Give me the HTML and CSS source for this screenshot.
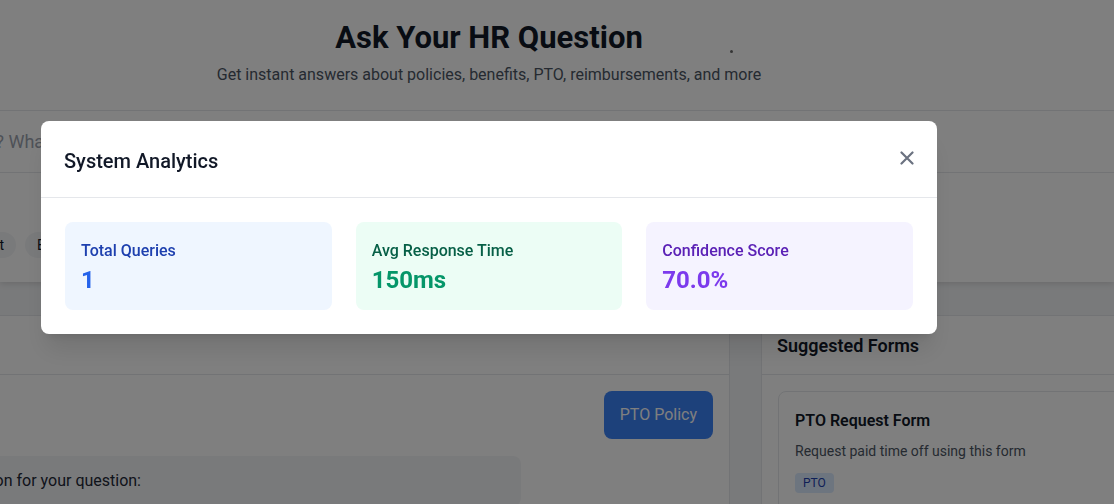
FILE: index.html
```html
<!DOCTYPE html>
<html lang="en">
<head>
<meta charset="utf-8">
<title>Ask Your HR Question</title>
<link rel="stylesheet" href="styles.css">
</head>
<body>
<div class="page">
  <header class="hero">
    <div class="hero-inner">
      <h1 class="hero-title">Ask Your HR Question</h1>
      <p class="hero-sub">Get instant answers about policies, benefits, PTO, reimbursements, and more</p>
    </div>
    <span class="dot"></span>
  </header>

  <section class="search-card">
    <div class="search-row">
      <div class="lead lead-search"><span class="search-text">e.g., How many vacation days do I have?</span></div>
      <span class="search-text">&nbsp;What is the parental leave policy?</span>
    </div>
    <div class="quick">
      <div class="quick-label">Popular questions</div>
      <div class="chips">
        <div class="lead lead-chips"><span class="chip">Request equipment</span></div>
        <span class="chip">Benefits enrollment</span>
        <span class="chip">Remote work policy</span>
      </div>
    </div>
  </section>

  <main class="grid">
    <section class="panel chat">
      <div class="panel-head"></div>
      <div class="messages">
        <div class="msg-row user"><div class="bubble user-bubble">PTO Policy</div></div>
        <div class="msg-row bot">
          <div class="bubble bot-bubble">
            <div class="lead lead-bot"><span class="bot-text">Here is the relevant information for your question:</span></div>
          </div>
        </div>
      </div>
    </section>
    <aside class="panel forms">
      <div class="panel-head"><h2 class="panel-title">Suggested Forms</h2></div>
      <div class="forms-body">
        <div class="form-card">
          <h3 class="form-title">PTO Request Form</h3>
          <p class="form-desc">Request paid time off using this form</p>
          <span class="tag">PTO</span>
        </div>
      </div>
    </aside>
  </main>
</div>

<div class="overlay">
  <div class="modal">
    <div class="modal-head">
      <h2 class="modal-title">System Analytics</h2>
      <button class="close" aria-label="Close">
        <svg width="14" height="14" viewBox="0 0 14 14"><path d="M1.5 1.5L12.5 12.5M12.5 1.5L1.5 12.5" stroke="#6b7280" stroke-width="2.2" stroke-linecap="round"/></svg>
      </button>
    </div>
    <div class="modal-body">
      <div class="stat stat-blue">
        <div class="stat-label">Total Queries</div>
        <div class="stat-value">1</div>
      </div>
      <div class="stat stat-green">
        <div class="stat-label">Avg Response Time</div>
        <div class="stat-value">150ms</div>
      </div>
      <div class="stat stat-purple">
        <div class="stat-label">Confidence Score</div>
        <div class="stat-value">70.0%</div>
      </div>
    </div>
  </div>
</div>
</body>
</html>
```

FILE: styles.css
```css
* { box-sizing: border-box; }
html, body { margin: 0; padding: 0; }
body {
  width: 1114px;
  height: 504px;
  overflow: hidden;
  background: #f3f4f6;
  font-family: Roboto, "Noto Sans", "Liberation Sans", sans-serif;
  color: #111827;
}
.page { width: 1114px; background: #f3f4f6; }

/* right-aligned box whose text overflows off the left edge */
.lead {
  display: flex;
  justify-content: flex-end;
  flex: none;
  white-space: nowrap;
}

.hero {
  position: relative;
  background: #ffffff;
  border-bottom: 1px solid #e5e7eb;
  height: 111px;
}
.hero-inner {
  width: 896px;
  margin-left: 41px;
  padding-top: 19px;
  text-align: center;
}
.hero-title {
  margin: 0;
  font-size: 31px;
  line-height: 37px;
  font-weight: 700;
  color: #111827;
}
.hero-sub {
  margin: 7px 0 0;
  font-size: 16px;
  line-height: 24px;
  color: #4b5563;
}
.dot {
  position: absolute;
  left: 730px;
  top: 50px;
  width: 3px;
  height: 3px;
  border-radius: 50%;
  background: #6b6b6b;
}

.search-card {
  background: #ffffff;
  box-shadow: 0 2px 6px rgba(0,0,0,0.12);
  margin-bottom: 33px;
}
.search-row {
  height: 62px;
  border-bottom: 1px solid #e5e7eb;
  display: flex;
  align-items: center;
  overflow: hidden;
  white-space: nowrap;
}
.lead-search {
  width: 400px;
  margin-left: -396px;
}
.search-text {
  font-size: 18px;
  color: #9ca3af;
}
.quick {
  height: 109px;
  padding-top: 20px;
}
.quick-label {
  font-size: 14px;
  line-height: 20px;
  color: #4b5563;
  margin-left: 60px;
}
.chips {
  display: flex;
  gap: 9px;
  margin-top: 19px;
}
.lead-chips {
  width: 300px;
  margin-left: -284px;
}
.chip {
  background: #f3f4f6;
  border-radius: 9999px;
  padding: 3px 12px;
  font-size: 14px;
  line-height: 20px;
  color: #111827;
  white-space: nowrap;
}

.grid {
  display: flex;
  gap: 31px;
  margin-left: -92px;
}
.panel {
  flex: none;
  background: #ffffff;
  border: 1px solid #e5e7eb;
}
.chat { width: 822px; height: 220px; }
.forms { width: 400px; height: 220px; }
.panel-head {
  height: 59px;
  padding: 16px 16px 12px 15px;
  border-bottom: 1px solid #e5e7eb;
}
.panel-title {
  margin: 0;
  font-size: 18px;
  line-height: 28px;
  font-weight: 600;
  color: #111827;
}
.messages {
  padding: 16px 16px;
  display: flex;
  flex-direction: column;
  gap: 17px;
}
.msg-row { display: flex; }
.msg-row.user { justify-content: flex-end; }
.bubble {
  border-radius: 8px;
  font-size: 16px;
  line-height: 24px;
}
.user-bubble {
  background: #3b82f6;
  color: #ffffff;
  padding: 12px 16px;
}
.bot-bubble {
  background: #f3f4f6;
  color: #1f2937;
  padding: 13px 16px;
  width: 596px;
  display: flex;
}
.lead-bot {
  width: 200px;
}
.bot-text { color: #1f2937; }

.forms-body { padding: 16px; }
.form-card {
  border: 1px solid #e5e7eb;
  border-radius: 8px;
  padding: 17px 16px 16px;
  height: 140px;
}
.form-title {
  margin: 0;
  font-size: 16px;
  line-height: 24px;
  font-weight: 600;
  color: #111827;
}
.form-desc {
  margin: 8px 0 11px;
  font-size: 14px;
  line-height: 20px;
  color: #4b5563;
}
.tag {
  display: inline-block;
  background: #dbeafe;
  color: #1e40af;
  font-size: 12px;
  line-height: 16px;
  padding: 2px 8px;
  border-radius: 4px;
}

.overlay {
  position: fixed;
  inset: 0;
  background: rgba(0,0,0,0.5);
  padding: 121px 0 0 41px;
}
.modal {
  width: 896px;
  background: #ffffff;
  border-radius: 8px;
  box-shadow: 0 20px 25px -5px rgba(0,0,0,0.1), 0 8px 10px -6px rgba(0,0,0,0.1);
}
.modal-head {
  display: flex;
  align-items: center;
  justify-content: space-between;
  padding: 26px 23px 22px 23px;
  border-bottom: 1px solid #e5e7eb;
}
.modal-title {
  margin: 0;
  font-size: 20px;
  line-height: 28px;
  font-weight: 500;
  color: #111827;
}
.close {
  border: 0;
  background: none;
  padding: 0;
  width: 14px;
  height: 14px;
  display: flex;
  cursor: pointer;
  margin-top: -6px;
}
.modal-body {
  padding: 24px;
  display: grid;
  grid-template-columns: repeat(3, 1fr);
  gap: 24px;
}
.stat {
  border-radius: 8px;
  padding: 17px 16px 15px;
}
.stat-label {
  font-size: 16px;
  line-height: 24px;
  font-weight: 500;
}
.stat-value {
  font-size: 24px;
  line-height: 32px;
  font-weight: 700;
  padding-top: 1px;
  margin-bottom: -1px;
}
.stat-blue { background: #eff6ff; }
.stat-blue .stat-label { color: #1e40af; }
.stat-blue .stat-value { color: #2563eb; }
.stat-green { background: #ecfdf5; }
.stat-green .stat-label { color: #065f46; }
.stat-green .stat-value { color: #059669; }
.stat-purple { background: #f5f3ff; }
.stat-purple .stat-label { color: #5b21b6; }
.stat-purple .stat-value { color: #7c3aed; }
```
